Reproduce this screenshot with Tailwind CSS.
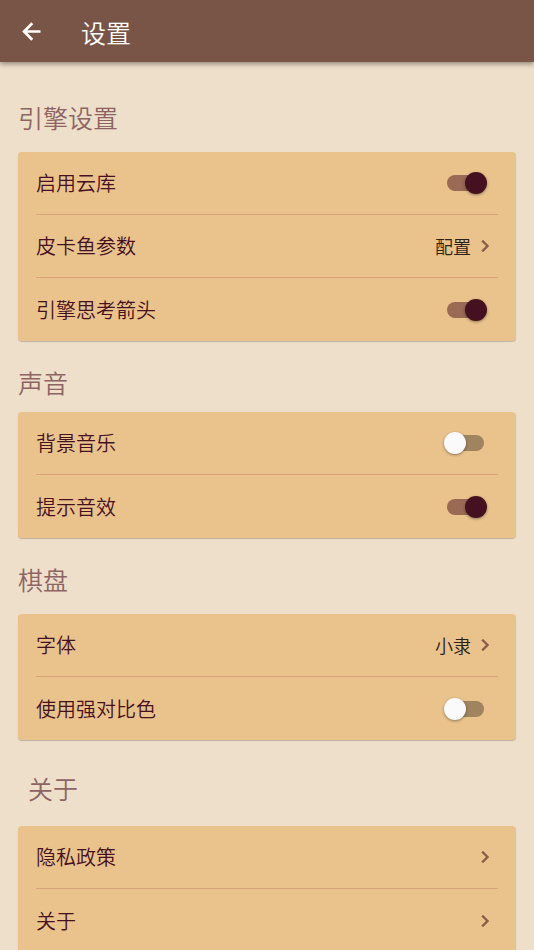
<!DOCTYPE html>
<html lang="zh-CN">
<head>
    <meta charset="UTF-8">
    <meta name="viewport" content="width=device-width, initial-scale=1.0">
    <title>设置</title>
    <script src="https://cdn.jsdelivr.net/npm/@tailwindcss/browser@4"></script>
</head>
<body class="h-screen flex flex-col bg-[#eedfca] text-[#45101f] font-['Noto_Sans_CJK_SC',sans-serif] font-[350]">
    <!-- Chevron shared by the link rows -->
    <svg class="hidden">
        <symbol id="chevron" viewBox="0 0 24 24">
            <path d="M10 6 8.59 7.41 13.17 12l-4.58 4.59L10 18l6-6z" fill="currentColor" stroke="currentColor" stroke-width=".4"/>
        </symbol>
    </svg>

    <header class="relative z-10 shrink-0 h-[62px] px-[18px] flex items-center gap-9 bg-[#795547] text-white shadow-[0_2px_5px_rgba(0,0,0,0.4)]">
        <button type="button" aria-label="返回" class="cursor-pointer">
            <svg class="size-[27px]" viewBox="0 0 24 24" fill="none" stroke="currentColor" stroke-width="2.4">
                <path d="M20 12H5.5M12.7 4.7 5.4 12l7.3 7.3"/>
            </svg>
        </button>
        <h1 class="pt-px text-[25px] leading-9 font-[350]">设置</h1>
    </header>

    <main class="flex-1 overflow-y-auto [scrollbar-width:none] px-[18px] pb-8">
        <section class="pt-[37px]">
            <h2 class="mb-[17px] text-[25px] leading-9 font-[350] text-[#8d6463]">引擎设置</h2>
            <div class="px-[18px] rounded-sm bg-[#eac38c] shadow-[0_1px_1px_rgba(0,0,0,0.2)]">
                <label class="h-[63px] flex items-center justify-between border-b border-[#d8a378] cursor-pointer">
                    <span class="text-xl">启用云库</span>
                    <input type="checkbox" checked class="appearance-none relative mr-[14px] w-[37px] h-4 rounded-full bg-[#9f845f] checked:bg-[#9a6a55] before:absolute before:-top-[3px] before:-left-[3px] before:size-[22px] before:rounded-full before:bg-[#fafafa] before:shadow-[0_1px_3px_rgba(0,0,0,0.4)] checked:before:left-[18px] checked:before:bg-[#45101f]">
                </label>
                <a href="#" class="h-[63px] flex items-center border-b border-[#d8a378]">
                    <span class="flex-1 text-xl">皮卡鱼参数</span>
                    <span class="text-lg text-[#2b2118]">配置</span>
                    <svg class="size-6 ml-0.5 mr-px text-[#8d5a4e]"><use href="#chevron"/></svg>
                </a>
                <label class="h-[63px] flex items-center justify-between cursor-pointer">
                    <span class="text-xl">引擎思考箭头</span>
                    <input type="checkbox" checked class="appearance-none relative mr-[14px] w-[37px] h-4 rounded-full bg-[#9f845f] checked:bg-[#9a6a55] before:absolute before:-top-[3px] before:-left-[3px] before:size-[22px] before:rounded-full before:bg-[#fafafa] before:shadow-[0_1px_3px_rgba(0,0,0,0.4)] checked:before:left-[18px] checked:before:bg-[#45101f]">
                </label>
            </div>
        </section>

        <section class="pt-[23px]">
            <h2 class="mb-3 text-[25px] leading-9 font-[350] text-[#8d6463]">声音</h2>
            <div class="px-[18px] rounded-sm bg-[#eac38c] shadow-[0_1px_1px_rgba(0,0,0,0.2)]">
                <label class="h-[63px] flex items-center justify-between border-b border-[#d8a378] cursor-pointer">
                    <span class="text-xl">背景音乐</span>
                    <input type="checkbox" class="appearance-none relative mr-[14px] w-[37px] h-4 rounded-full bg-[#9f845f] checked:bg-[#9a6a55] before:absolute before:-top-[3px] before:-left-[3px] before:size-[22px] before:rounded-full before:bg-[#fafafa] before:shadow-[0_1px_3px_rgba(0,0,0,0.4)] checked:before:left-[18px] checked:before:bg-[#45101f]">
                </label>
                <label class="h-[63px] flex items-center justify-between cursor-pointer">
                    <span class="text-xl">提示音效</span>
                    <input type="checkbox" checked class="appearance-none relative mr-[14px] w-[37px] h-4 rounded-full bg-[#9f845f] checked:bg-[#9a6a55] before:absolute before:-top-[3px] before:-left-[3px] before:size-[22px] before:rounded-full before:bg-[#fafafa] before:shadow-[0_1px_3px_rgba(0,0,0,0.4)] checked:before:left-[18px] checked:before:bg-[#45101f]">
                </label>
            </div>
        </section>

        <section class="pt-[23px]">
            <h2 class="mb-[17px] text-[25px] leading-9 font-[350] text-[#8d6463]">棋盘</h2>
            <div class="px-[18px] rounded-sm bg-[#eac38c] shadow-[0_1px_1px_rgba(0,0,0,0.2)]">
                <a href="#" class="h-[63px] flex items-center border-b border-[#d8a378]">
                    <span class="flex-1 text-xl">字体</span>
                    <span class="text-lg text-[#2b2118]">小隶</span>
                    <svg class="size-6 ml-0.5 mr-px text-[#8d5a4e]"><use href="#chevron"/></svg>
                </a>
                <label class="h-[63px] flex items-center justify-between cursor-pointer">
                    <span class="text-xl">使用强对比色</span>
                    <input type="checkbox" class="appearance-none relative mr-[14px] w-[37px] h-4 rounded-full bg-[#9f845f] checked:bg-[#9a6a55] before:absolute before:-top-[3px] before:-left-[3px] before:size-[22px] before:rounded-full before:bg-[#fafafa] before:shadow-[0_1px_3px_rgba(0,0,0,0.4)] checked:before:left-[18px] checked:before:bg-[#45101f]">
                </label>
            </div>
        </section>

        <section class="pt-[30px]">
            <h2 class="mb-5 px-[10px] text-[25px] leading-9 font-[350] text-[#8d6463]">关于</h2>
            <div class="px-[18px] rounded-sm bg-[#eac38c] shadow-[0_1px_1px_rgba(0,0,0,0.2)]">
                <a href="#" class="h-[63px] flex items-center border-b border-[#d8a378]">
                    <span class="flex-1 text-xl">隐私政策</span>
                    <svg class="size-6 mr-px text-[#8d5a4e]"><use href="#chevron"/></svg>
                </a>
                <a href="#" class="h-[63px] flex items-center">
                    <span class="flex-1 text-xl">关于</span>
                    <svg class="size-6 mr-px text-[#8d5a4e]"><use href="#chevron"/></svg>
                </a>
            </div>
        </section>
    </main>
</body>
</html>
